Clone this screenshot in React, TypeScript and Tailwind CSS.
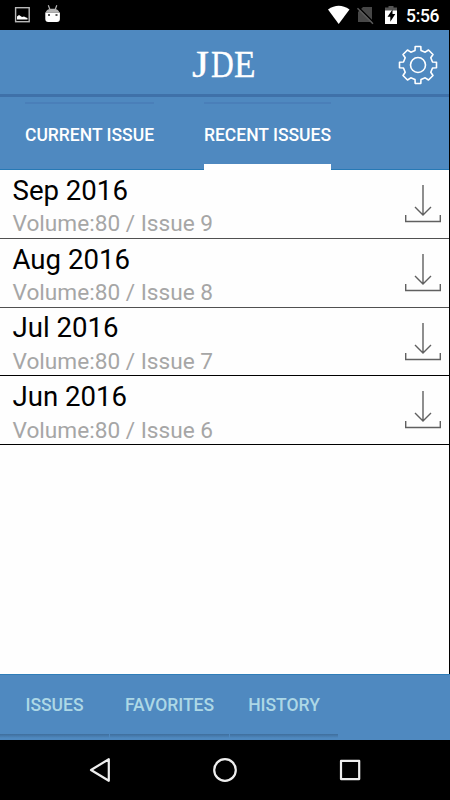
type Issue = {
  month: string
  volume: number
  issue: number
  line: string
}

const issues: Issue[] = [
  { month: "Sep 2016", volume: 80, issue: 9, line: "border-[#505050]" },
  { month: "Aug 2016", volume: 80, issue: 8, line: "border-[#505050]" },
  { month: "Jul 2016", volume: 80, issue: 7, line: "border-black" },
  { month: "Jun 2016", volume: 80, issue: 6, line: "border-black" },
]

const footerTabs = [
  { label: "ISSUES", width: "w-[109px]" },
  { label: "FAVORITES", width: "w-[119px]" },
  { label: "HISTORY", width: "w-[108px]" },
]

function StatusBar() {
  return (
    <div className="h-[30px] shrink-0 bg-black">
      <svg width="450" height="30" viewBox="0 0 450 30">
        <rect x="15.6" y="7.7" width="13.6" height="14" fill="none" stroke="#b9b9b9" strokeWidth="1.4" />
        <path d="M17 19.500v-3l2-1.500 1.500 1 1.500 1 2-.5 2 1 1.500.5v1.500z" fill="#fff" />
        <path d="M45.300 12.500h14.600v6.500q0 3-3 3h-8.600q-3 0-3-3z" fill="#fff" />
        <path d="M45.500 12.700q1-3.500 5-4h4q4 .5 5 4z" fill="#b5b5b5" />
        <path d="M49.800 9.200l-1.500-4M55.300 9.200l1.500-4" stroke="#b5b5b5" strokeWidth="1.200" />
        <path d="M48 14h2v2h-2zM55.500 14h2v2h-2z" fill="#555" />
        <path d="M328 9.500q10.700-7.500 21.500 0L338.700 24z" fill="#fff" />
        <path d="M363 7h9v15h-14V12z" fill="#474747" />
        <path d="M358.500 7.200l15.500 15.500" stroke="#000" strokeWidth="1.500" />
        <path d="M357.500 8.200l15.500 15.500" stroke="#5a5a5a" strokeWidth="1.500" />
        <path d="M385 7.500h3.500V6h5v1.500h3.500v5h-12z" fill="#555" />
        <path d="M385 10.500h12V24h-12z" fill="#fff" />
        <path d="M392.500 9.500l-5 7.300h2.800v5l5-7.800h-2.800z" fill="#000" />
        <text x="406" y="22" fill="#fff" fontFamily="Roboto, sans-serif" fontSize="17.500" fontWeight="500" textLength="33.500">5:56</text>
      </svg>
    </div>
  )
}

function GearIcon() {
  return (
    <svg width="40" height="40" viewBox="0 0 40 40" fill="none" stroke="#fff" strokeWidth="1.600" strokeLinejoin="round">
      <circle cx="20" cy="20" r="7.500" />
      <path d="M17.200 1.500H22.800L23 5.500 27.200 7.200 30.500 5 35 9.500 32.800 12.800 34.500 17 38.500 17.200V22.800L34.500 23 32.800 27.200 35 30.500 30.500 35 27.200 32.800 23 34.500 22.800 38.500H17.200L17 34.500 12.800 32.800 9.500 35 5 30.500 7.200 27.200 5.500 23 1.500 22.800V17.200L5.500 17 7.200 12.800 5 9.500 9.500 5 12.800 7.200 17 5.500z" />
    </svg>
  )
}

function DownloadIcon() {
  return (
    <svg width="36" height="40" viewBox="0 0 36 40" fill="none" stroke="#606060" strokeWidth="1.400">
      <path d="M18 1v30M10 23l8 8 8-8M.700 31v6.500h34.600V31" />
    </svg>
  )
}

export default function App() {
  return (
    <div className="flex h-[800px] w-[450px] flex-col overflow-hidden bg-black font-['Roboto',sans-serif]">
      <StatusBar />

      <div className="flex h-[644px] shrink-0 flex-col border-r border-black bg-[#fefefe]">
        <header className="grid h-[67px] shrink-0 grid-cols-[1fr_66px_1fr] items-center border-b-[3px] border-[#3f71a9] bg-[#4f89c0]">
          <h1 className="col-start-2 flex items-center pt-[4px] font-['Liberation_Serif',serif] text-[38px] leading-[60px] text-white [-webkit-text-stroke:0.3px_#fff]">
            <span className="w-[19px] origin-left scale-x-[1.15]">J</span>
            <span className="w-[23px] origin-left scale-x-[0.83]">D</span>
            <span className="w-[22px] origin-left scale-x-[0.93]">E</span>
          </h1>
          <div className="justify-self-end pt-[5px] pr-[11px]">
            <GearIcon />
          </div>
        </header>

        <nav className="flex h-[73px] shrink-0 gap-[50px] border-b border-[#2779b5] bg-[#4f89c0] pt-[5px] pl-[25px] text-[17.500px] font-medium text-white">
          <div className="flex h-[67px] w-[129px] items-center justify-center border-t-2 border-[#4a7fb9] pb-[2px] whitespace-nowrap">
            CURRENT ISSUE
          </div>
          <div className="flex h-[68px] w-[127px] flex-col border-t-2 border-[#4a7fb9] whitespace-nowrap">
            <div className="flex h-[60px] items-center justify-center pt-[2px]">RECENT ISSUES</div>
            <div className="h-[6px] shrink-0 bg-white" />
          </div>
        </nav>

        <main className="flex flex-col">
          {issues.map((item) => (
            <div key={item.month} className={`flex h-[68.75px] shrink-0 justify-between border-b pr-[8px] pl-[12.500px] ${item.line}`}>
              <div className="flex flex-col">
                <span className="pt-[4.750px] text-[27.600px] leading-[32px] text-black">{item.month}</span>
                <span className="pt-[3.500px] text-[22.650px] leading-[28px] text-[#a6a6a6]">
                  Volume:{item.volume} / Issue {item.issue}
                </span>
              </div>
              <div className="pt-[14px]">
                <DownloadIcon />
              </div>
            </div>
          ))}
        </main>
      </div>

      <footer className="flex h-[66px] shrink-0 gap-px border-t border-[#2f7db8] bg-[#4f89c0] text-[17.500px] font-medium text-[#add8e6]">
        {footerTabs.map((tab) => (
          <div key={tab.label} className={`flex flex-col ${tab.width}`}>
            <div className="flex h-[59px] items-center justify-center pt-[1px]">{tab.label}</div>
            <div className="h-[4px] bg-linear-to-b from-[#3f6e9c] to-[#4f89c0]" />
          </div>
        ))}
      </footer>

      <div className="h-[60px] shrink-0 bg-black">
        <svg width="450" height="60" viewBox="0 0 450 60" fill="none" stroke="#eee" strokeWidth="2.200" strokeLinejoin="round">
          <path d="M91 30l17.800-10.800v21.600z" />
          <circle cx="225" cy="30" r="10.800" />
          <rect x="341" y="20.900" width="18.200" height="18.200" />
        </svg>
      </div>
    </div>
  )
}
